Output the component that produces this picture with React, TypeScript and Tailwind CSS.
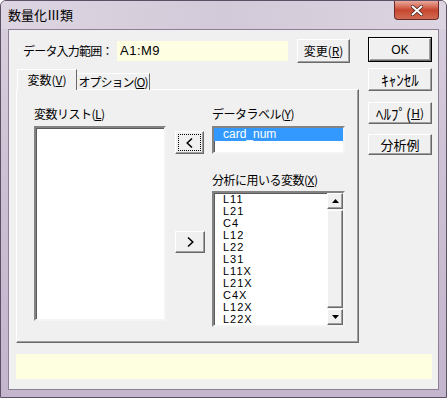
const jp = { fontFamily: '"Noto Sans CJK JP", "Noto Sans", sans-serif' }
const lat = { fontFamily: '"Liberation Sans", "Noto Sans CJK JP", sans-serif' }

const btn =
  "flex items-center justify-center whitespace-nowrap bg-[#f0f0f0] border border-t-white border-l-white border-b-[#696969] border-r-[#696969] shadow-[inset_-1px_-1px_0_#a0a0a0] text-[12px] text-black leading-none"

const sunken =
  "bg-white border-2 border-t-[#838383] border-l-[#838383] border-b-[#f4f4f4] border-r-[#f4f4f4] shadow-[inset_1px_1px_0_#5a5a5a]"

const items = ["L11", "L21", "C4", "L12", "L22", "L31", "L11X", "L21X", "C4X", "L12X", "L22X"]

function Arrow({ up }: { up?: boolean }) {
  return (
    <div className={btn + " w-[16px] h-[16px]"}>
      <svg width="7" height="4" viewBox="0 0 7 4">
        {up ? <path d="M3.5 0 L7 4 L0 4 Z" fill="#000" /> : <path d="M0 0 L7 0 L3.5 4 Z" fill="#000" />}
      </svg>
    </div>
  )
}

export default function App() {
  return (
    <div
      className="w-[447px] h-[398px] flex flex-col rounded-t-[6px] border border-[#5d4f66] bg-gradient-to-b from-[#d9d0de] via-[#cbbfd3] to-[#c4b6cd] overflow-hidden"
      style={jp}
    >
      {/* title bar */}
      <div className="h-[28px] flex items-start justify-between bg-gradient-to-r from-[#ddd5e1] via-[#d3cad9] to-[#dcd4e0]">
        <div className="pl-[7px] pt-[5px] text-[13px] text-black leading-[18px]">数量化Ⅲ類</div>
        <div className="mr-[7px] w-[45px] h-[19px] rounded-b-[4px] border border-t-0 border-[#6b2a26] bg-gradient-to-b from-[#e9a99c] via-[#c7452f] to-[#d06a52] flex items-center justify-center">
          <svg width="12" height="11" viewBox="0 0 12 11">
            <path d="M1.5 1.5 L10.5 9.5 M10.5 1.5 L1.5 9.5" stroke="#40201c" strokeWidth="3.4" strokeLinecap="round" />
            <path d="M1.5 1.5 L10.5 9.5 M10.5 1.5 L1.5 9.5" stroke="#fff" strokeWidth="2" strokeLinecap="round" />
          </svg>
        </div>
      </div>

      {/* client */}
      <div className="ml-[7px] w-[431px] h-[361px] bg-[#f0f0f0] border border-[#8c7f96] pl-[7px] pr-[6px] pt-[8px] flex flex-col">
        <div className="flex">
          {/* left column */}
          <div className="w-[343px] flex flex-col">
            <div className="flex items-center h-[25px]">
              <div className="pl-[7px] w-[101px] whitespace-nowrap text-[12px] tracking-[-0.8px] leading-none">データ入力範囲：</div>
              <div className="w-[171px] h-[20px] bg-[#fefee2] flex items-center pl-[3px] text-[13px] tracking-[0.5px]" style={lat}>
                A1:M9
              </div>
              <div className={btn + " ml-[9px] w-[53px] h-[24px]"}>
                変更(<span className="underline">R</span>)
              </div>
            </div>

            {/* tabs */}
            <div className="flex items-end mt-[6px] h-[21px] relative z-10">
              <div className="ml-[1px] w-[60px] h-[21px] bg-[#f0f0f0] border border-b-0 border-t-white border-l-white border-r-[#696969] flex items-center justify-center whitespace-nowrap text-[12px] leading-none">
                変数(<span className="underline">V</span>)
              </div>
              <div className="w-[73px] h-[17px] border-r border-r-[#696969] border-t border-t-white flex items-center justify-center whitespace-nowrap text-[12px] tracking-[-1px] leading-none">
                オプション(<span className="underline">O</span>)
              </div>
            </div>

            {/* tab panel */}
            <div className="-mt-[1px] h-[254px] border border-t-white border-l-white border-b-[#696969] border-r-[#696969] shadow-[inset_-1px_-1px_0_#a0a0a0] flex pl-[17px] pt-[17px]">
              <div className="flex flex-col">
                <div className="text-[12px] leading-[14px] h-[19px] whitespace-nowrap tracking-[-0.5px]">
                  変数リスト(<span className="underline">L</span>)
                </div>
                <div className={sunken + " w-[132px] h-[195px]"} />
              </div>

              <div className="flex flex-col ml-[9px] w-[30px]">
                <div className={btn + " mt-[24px] w-[29px] h-[23px]"}>
                  <div className="w-[23px] h-[17px] border border-dotted border-black flex items-center justify-center">
                    <svg width="7" height="10" viewBox="0 0 7 10">
                      <path d="M6 0.5 L1.2 5 L6 9.5" stroke="#000" strokeWidth="1.5" fill="none" />
                    </svg>
                  </div>
                </div>
                <div className={btn + " mt-[77px] w-[30px] h-[22px]"}>
                  <svg width="7" height="10" viewBox="0 0 7 10">
                    <path d="M1 0.5 L5.8 5 L1 9.5" stroke="#000" strokeWidth="1.5" fill="none" />
                  </svg>
                </div>
              </div>

              <div className="flex flex-col ml-[7px]">
                <div className="text-[12px] leading-[14px] h-[19px] whitespace-nowrap tracking-[-0.5px]">
                  データラベル(<span className="underline">Y</span>)
                </div>
                <div className={sunken + " w-[133px] h-[28px]"}>
                  <div className="h-[13px] bg-[#3399ff] text-white text-[12px] leading-[13px] pl-[9px]" style={lat}>
                    card_num
                  </div>
                </div>
                <div className="mt-[19px] text-[12px] leading-[14px] h-[18px] whitespace-nowrap tracking-[-0.5px]">
                  分析に用いる変数(<span className="underline">X</span>)
                </div>
                <div className={sunken + " w-[133px] h-[136px] flex"}>
                  <div className="flex-1 pl-[9px] overflow-hidden">
                    {items.map((t) => (
                      <div key={t} className="h-[12px] text-[11px] leading-[12px] tracking-[1px]" style={lat}>
                        {t}
                      </div>
                    ))}
                  </div>
                  <div className="w-[16px] bg-[#f4f4f4] flex flex-col justify-between">
                    <Arrow up />
                    <div className="flex-1 my-[1px] bg-[#f0f0f0] border border-t-white border-l-white border-b-[#696969] border-r-[#696969] shadow-[inset_-1px_-1px_0_#a0a0a0]" />
                    <Arrow />
                  </div>
                </div>
              </div>
            </div>
          </div>

          {/* right buttons */}
          <div className="ml-[9px] w-[64px] flex flex-col">
            <div className="-mt-[1px] w-[64px] h-[25px] border border-black">
              <div className={btn + " w-full h-full text-[12px]"} style={lat}>
                OK
              </div>
            </div>
            <div className={btn + " mt-[6px] w-[64px] h-[23px] text-[15px]"}>ｷｬﾝｾﾙ</div>
            <div className={btn + " mt-[11px] w-[64px] h-[22px] text-[15px]"}>
              ﾍﾙﾌﾟ(<span className="underline text-[12px]">H</span>
              <span className="text-[12px]">)</span>
            </div>
            <div className={btn + " mt-[10px] w-[64px] h-[21px] text-[13px]"}>分析例</div>
          </div>
        </div>

        {/* status bar */}
        <div className="mt-[11px] w-[416px] h-[25px] bg-[#fefee0]" />
      </div>
    </div>
  )
}
